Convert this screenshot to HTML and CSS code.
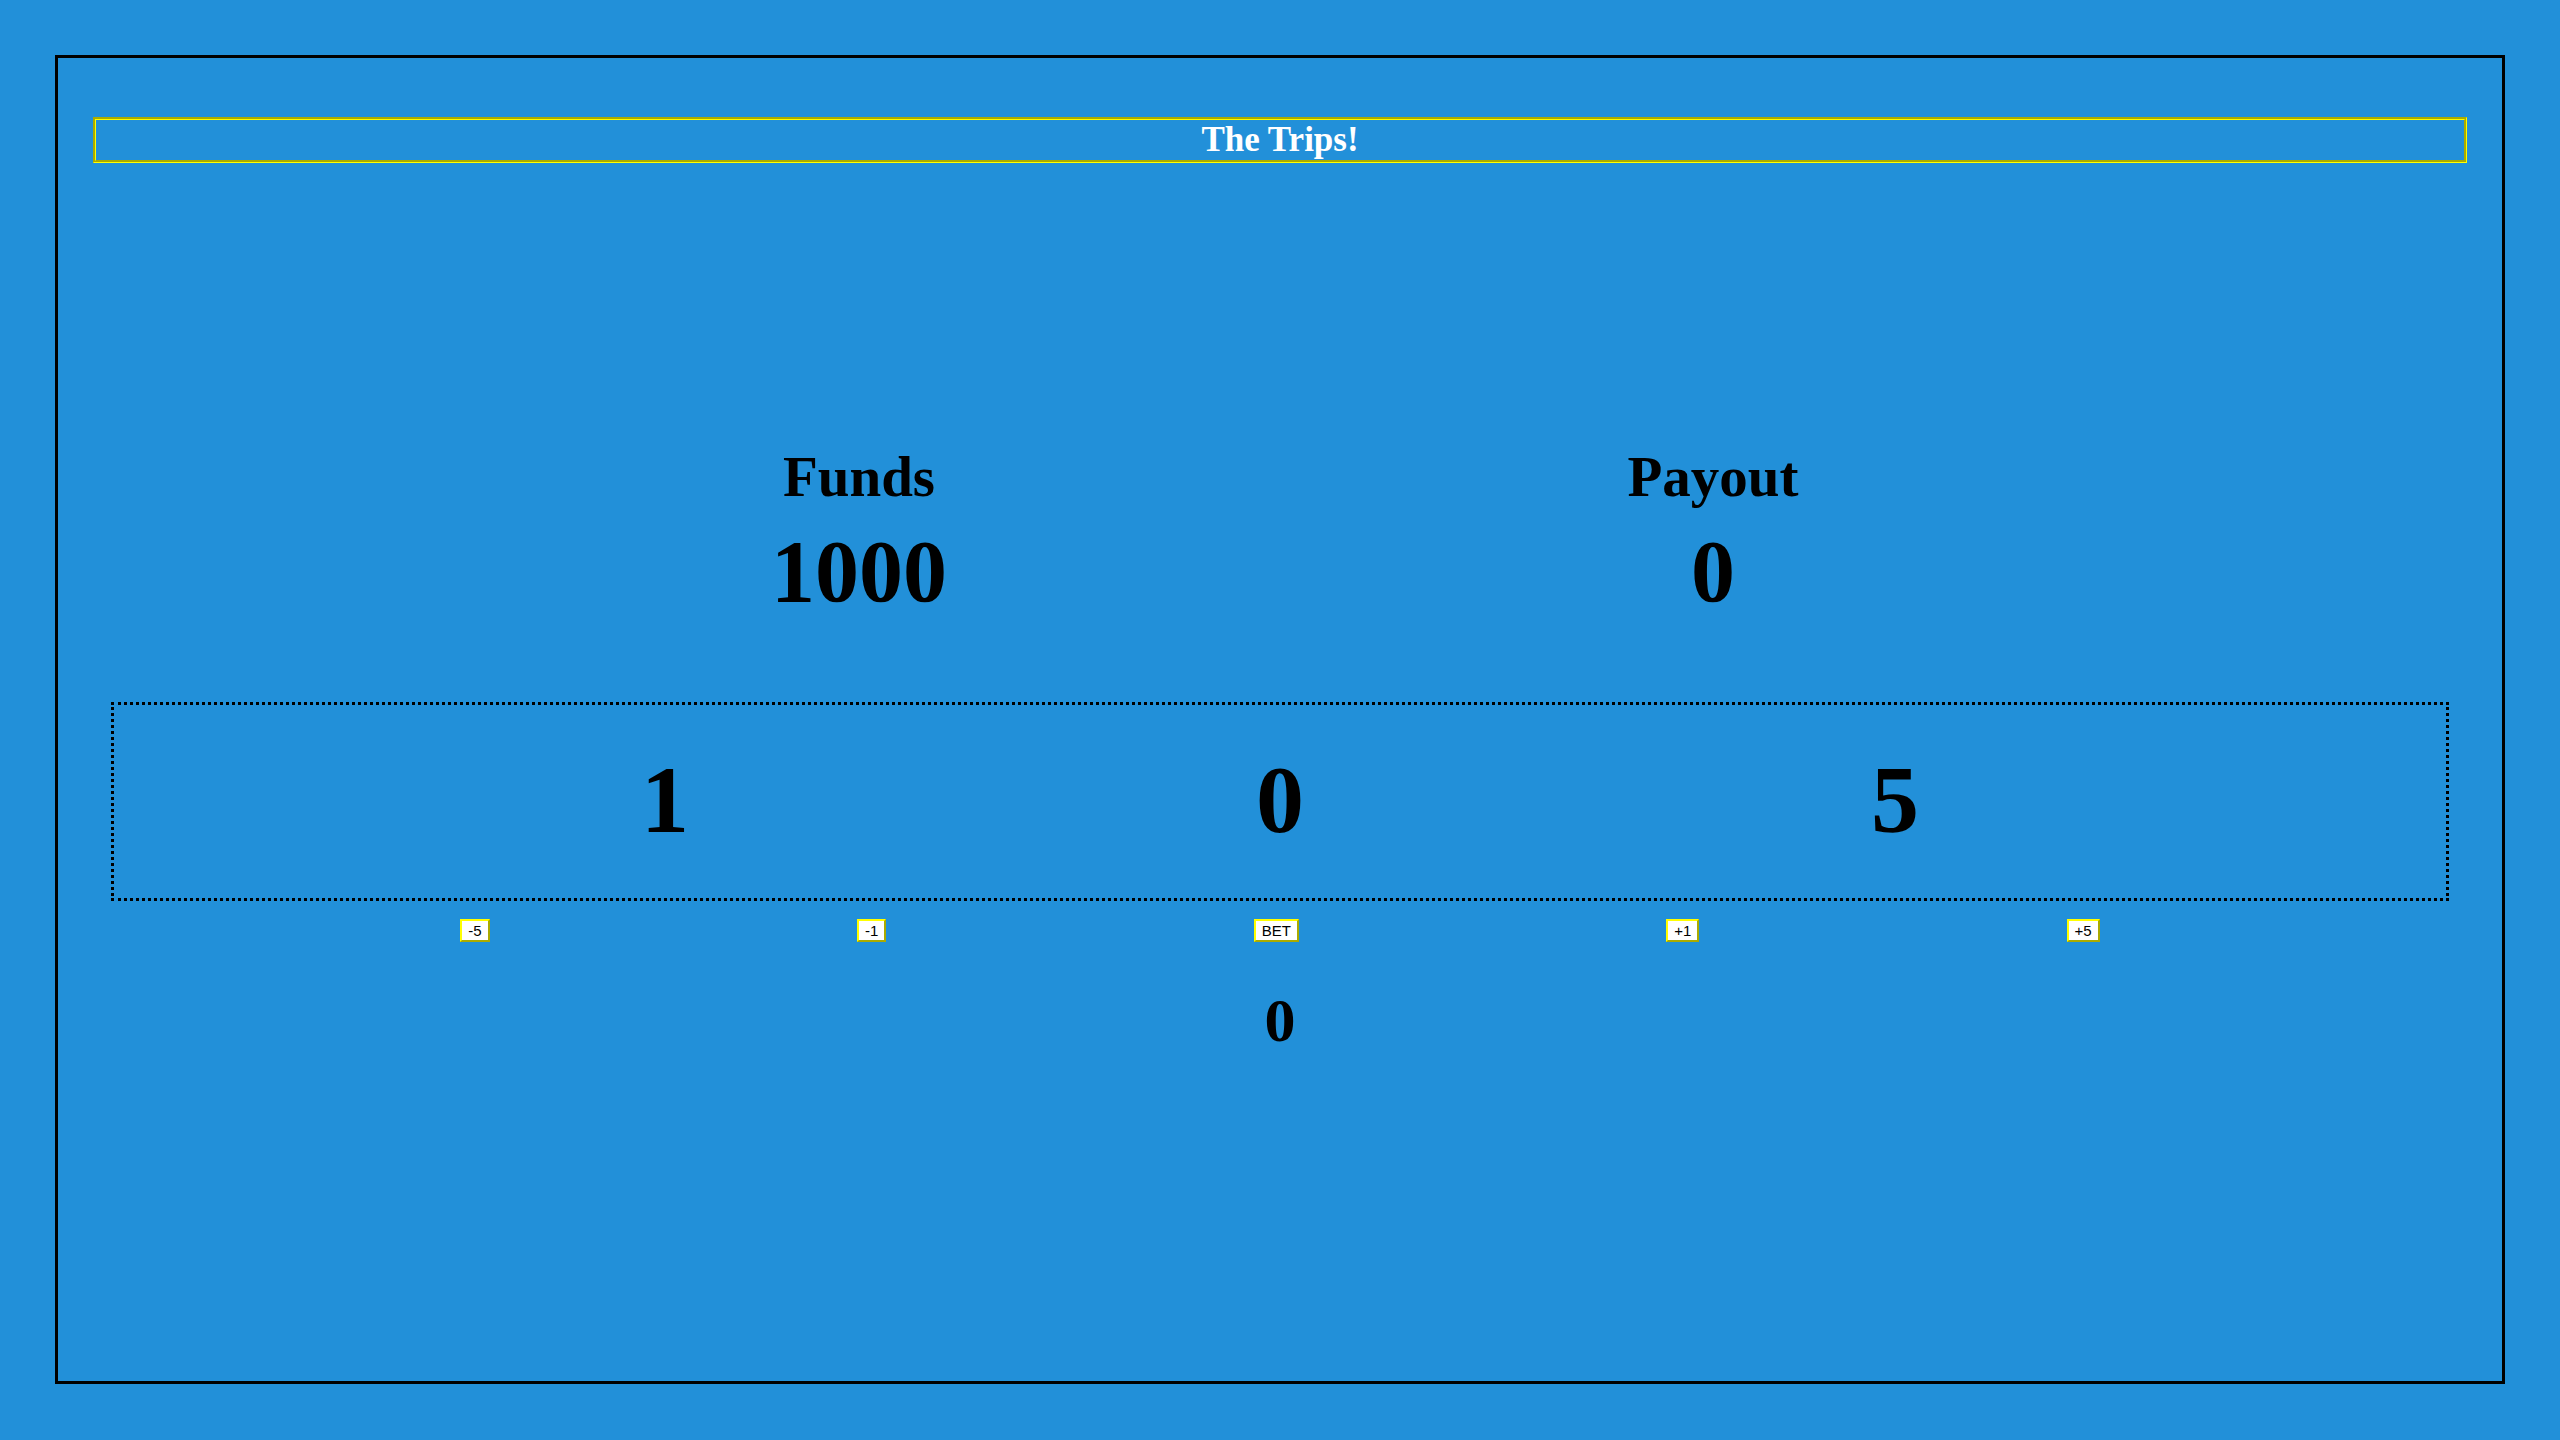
FILE: index.html
```html
<!DOCTYPE html>
<html lang="en">
<head>
<meta charset="utf-8">
<title>The Trips!</title>
<link rel="stylesheet" href="styles.css">
</head>
<body>
<main class="frame">
  <h1 class="title">The Trips!</h1>
  <section class="stats">
    <div class="stat">
      <div class="stat-label">Funds</div>
      <div class="stat-value">1000</div>
    </div>
    <div class="stat">
      <div class="stat-label">Payout</div>
      <div class="stat-value">0</div>
    </div>
  </section>
  <section class="reels">
    <div class="reel">1</div>
    <div class="reel">0</div>
    <div class="reel">5</div>
  </section>
  <div class="controls">
    <button class="btn">-5</button>
    <button class="btn">-1</button>
    <button class="btn">BET</button>
    <button class="btn">+1</button>
    <button class="btn">+5</button>
  </div>
  <div class="bet">0</div>
</main>
</body>
</html>
```

FILE: styles.css
```css
html, body {
  margin: 0;
  padding: 0;
  background: #2290d9;
}

body {
  font-family: "Liberation Serif", "Times New Roman", serif;
  color: #000;
}

.frame {
  box-sizing: border-box;
  margin: 55px;
  height: 1329px;
  border: 3px solid #000;
  padding: 59px 35px 0;
}

.title {
  margin: 0;
  border: 3px groove yellow;
  color: #fff;
  font-size: 35px;
  font-weight: bold;
  text-align: center;
  line-height: 40px;
}

.stats {
  display: flex;
  justify-content: center;
  padding-left: 12px;
  margin-top: 281px;
}

.stat {
  width: 854px;
  text-align: center;
  font-weight: bold;
}

.stat-label {
  font-size: 57px;
}

.stat-value {
  font-size: 88px;
  margin-top: 12px;
}

.reels {
  box-sizing: border-box;
  height: 199px;
  margin: 80px 18px 0;
  border: 3px dotted #000;
  padding-top: 39px;
  display: flex;
  justify-content: space-evenly;
  align-items: flex-start;
}

.reel {
  width: 128px;
  text-align: center;
  font-size: 96px;
  font-weight: bold;
}

.controls {
  display: flex;
  justify-content: space-evenly;
  align-items: flex-start;
  margin-top: 18px;
}

.btn {
  font-family: "Liberation Sans", Arial, sans-serif;
  font-size: 15px;
  line-height: 17px;
  padding: 1px 6px;
  background: #fff;
  color: #000;
  border: 2px outset yellow;
  margin: 0;
}

.bet {
  margin-top: 43px;
  text-align: center;
  font-size: 62px;
  font-weight: bold;
}
```
